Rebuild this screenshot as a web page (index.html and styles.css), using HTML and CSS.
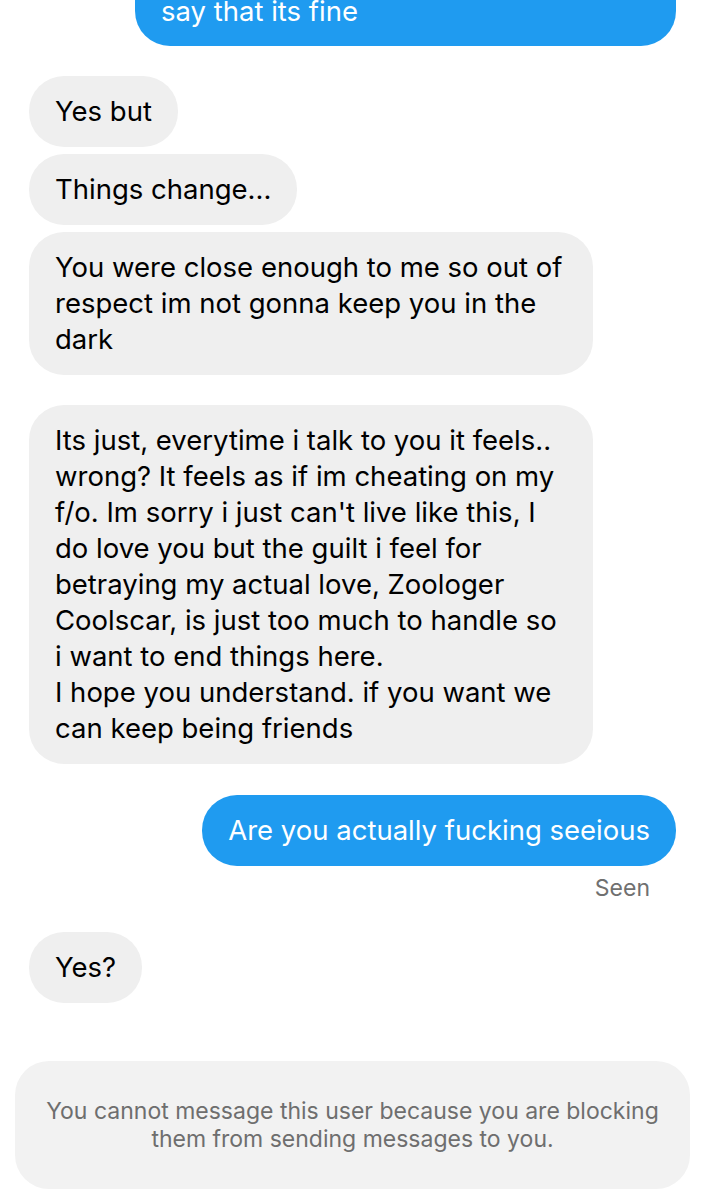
FILE: index.html
```html
<!DOCTYPE html>
<html lang="en">
<head>
  <meta charset="UTF-8" />
  <meta name="viewport" content="width=device-width, initial-scale=1.0"/>
  <title>Chat</title>
  <link rel="stylesheet" href="styles.css">
</head>
<body>
  <div class="chat">
    <div class="msg out first">say that its fine</div>

    <div class="msg in gap">Yes but</div>
    <div class="msg in">Things change...</div>
    <div class="msg in long">You were close enough to me so out of<br>respect im not gonna keep you in the<br>dark</div>

    <div class="msg in long gap">Its just, everytime i talk to you it feels..<br>wrong? It feels as if im cheating on my<br>f/o. Im sorry i just can't live like this, I<br>do love you but the guilt i feel for<br>betraying my actual love, Zoologer<br>Coolscar, is just too much to handle so<br>i want to end things here.<br>I hope you understand. if you want we<br>can keep being friends</div>

    <div class="msg out gap">Are you actually fucking seeious</div>
    <div class="seen">Seen</div>

    <div class="msg in gap">Yes?</div>
  </div>

  <div class="blocked">
    You cannot message this user because you are blocking<br>
    them from sending messages to you.
  </div>
</body>
</html>
```

FILE: styles.css
```css
body {
  margin: 0;
  background: #fff;
  font-family: Inter, "Noto Sans", sans-serif;
  width: 705px;
  height: 1200px;
  overflow: hidden;
}

.chat {
  display: flex;
  flex-direction: column;
  padding: 0 29px;
  margin-top: -23px;
}

.msg {
  font-size: 27.5px;
  line-height: 36px;
  padding: 17.5px 26px;
  border-radius: 35px;
  white-space: nowrap;
  margin-top: 7px;
}

.msg.gap {
  margin-top: 30px;
}

.msg.long {
  width: 512px;
}

.in {
  align-self: flex-start;
  background: #efefef;
  color: #000;
}

.out {
  align-self: flex-end;
  background: #1f9bf0;
  color: #fff;
}

.out.gap {
  margin-top: 31px;
}

.out.first {
  margin-top: 0;
  width: 489px;
  padding-top: 16px;
  padding-bottom: 16.5px;
  border-radius: 0 0 35px 35px;
}

.seen {
  align-self: flex-end;
  margin-right: 26px;
  margin-top: 8px;
  font-size: 23px;
  line-height: 28px;
  color: #707070;
}

.blocked {
  margin: 58px 15px 0;
  padding: 36px 10px;
  background: #f2f2f2;
  border-radius: 34px;
  text-align: center;
  font-size: 23px;
  line-height: 28px;
  color: #6e6e6e;
}
```
